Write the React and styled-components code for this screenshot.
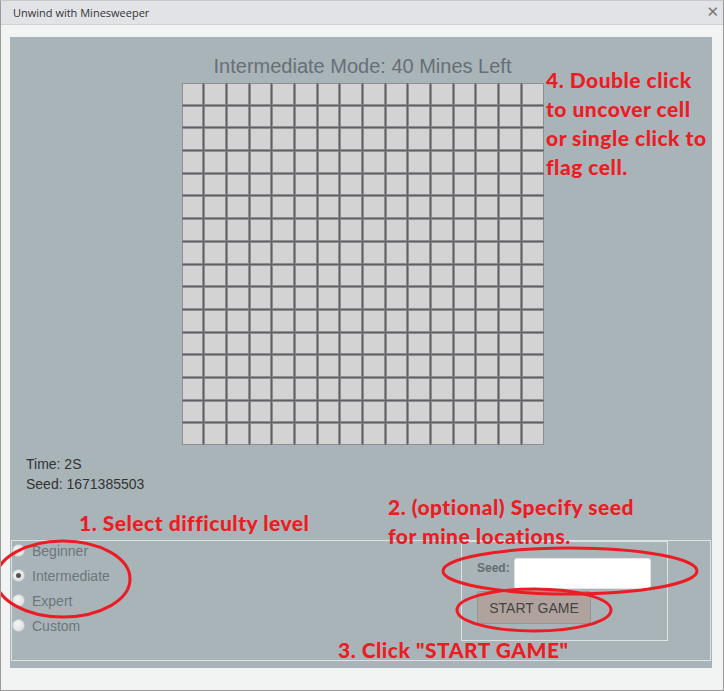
import React from 'react';
import styled, { createGlobalStyle } from 'styled-components';

const GlobalStyle = createGlobalStyle`
  body {
    margin: 0;
    background: #ffffff;
    font-family: "Liberation Sans", Arial, sans-serif;
  }
`;

const Window = styled.div`
  position: relative;
  width: 724px;
  height: 691px;
  box-sizing: border-box;
  border: 1px solid #9a9a9a;
  border-top-color: #c8c8c8;
  background: #f2f4f3;
  display: flex;
  flex-direction: column;
  overflow: hidden;
`;

const TitleBar = styled.div`
  height: 23px;
  flex: none;
  display: flex;
  align-items: center;
  justify-content: space-between;
  padding: 0 4px 0 12px;
  background: #e2e3e7;
  border-bottom: 1px solid #cfd2d4;
  font-family: "Open Sans", "Noto Sans", sans-serif;
  font-size: 11px;
  color: #333;
`;

const Close = styled.span`
  font-size: 15px;
  color: #777;
  font-family: "DejaVu Sans", sans-serif;
  line-height: 1;
`;

const Body = styled.div`
  flex: 1;
  padding: 12px 11px 0 9px;
`;

const Panel = styled.div`
  height: 631px;
  background: #a9b4b9;
  display: flex;
  flex-direction: column;
  padding: 0 1px 0 1px;
  box-sizing: border-box;
`;

const Board = styled.div`
  display: flex;
  flex-direction: column;
  align-items: center;
  padding: 13px 0 0 3px;
`;

const ModeTitle = styled.div`
  font-size: 20px;
  color: #676f74;
  line-height: 33px;
`;

const Grid = styled.div`
  width: 362px;
  height: 362px;
  display: grid;
  grid-template-columns: repeat(16, 1fr);
  grid-template-rows: repeat(16, 1fr);
  gap: 1px;
  background: #5e6064;
`;

const Cell = styled.div`
  background: #d3d3d3;
  border: 1px solid #8e8f90;
`;

const Info = styled.div`
  padding: 9px 0 0 15px;
  font-size: 14px;
  line-height: 20px;
  color: #333;
`;

const Options = styled.div`
  margin-top: 46px;
  height: 121px;
  box-sizing: border-box;
  border: 1px solid #dde2e4;
  display: flex;
  justify-content: space-between;
  align-items: flex-start;
  padding-right: 42px;
`;

const RadioList = styled.div`
  display: flex;
  flex-direction: column;
  margin-top: -3px;
`;

const RadioRow = styled.label`
  display: flex;
  align-items: center;
  height: 25px;
  gap: 7px;
  font-size: 14px;
  color: #6c767b;
`;

const Radio = styled.span`
  width: 13px;
  height: 13px;
  border-radius: 50%;
  box-sizing: border-box;
  border: 1px solid #c4c8ca;
  background: radial-gradient(circle at 40% 35%, #f4f4f4, #d9dbdc);
  display: flex;
  align-items: center;
  justify-content: center;
  &::after {
    content: '';
    width: 5px;
    height: 5px;
    border-radius: 50%;
    background: ${p => (p.checked ? '#555' : 'transparent')};
  }
`;

const SeedBox = styled.div`
  width: 207px;
  height: 100px;
  box-sizing: border-box;
  border: 1px solid #dde2e4;
  padding: 16px 0 0 15px;
  display: flex;
  flex-direction: column;
  gap: 2px;
`;

const SeedRow = styled.div`
  display: flex;
  align-items: flex-start;
  gap: 4px;
`;

const SeedLabel = styled.span`
  font-size: 12px;
  font-weight: bold;
  color: #656c70;
  padding-top: 3px;
`;

const SeedInput = styled.div`
  width: 137px;
  height: 31px;
  box-sizing: border-box;
  background: #fff;
  border: 1px solid #e6e6e6;
  border-radius: 3px;
`;

const StartButton = styled.button`
  width: 114px;
  height: 33px;
  box-sizing: border-box;
  background: #b0a39d;
  border: 1px solid #979592;
  border-radius: 3px;
  font-family: "Liberation Sans", Arial, sans-serif;
  font-size: 14px;
  color: #444;
  padding: 0;
`;

const Note = styled.div`
  position: absolute;
  left: ${p => p.x}px;
  top: ${p => p.y}px;
  font-family: Lato, "Open Sans", sans-serif;
  font-weight: 900;
  font-size: 21px;
  letter-spacing: 0.5px;
  line-height: 29px;
  color: #ec1c24;
  white-space: nowrap;
`;

const Marks = styled.svg`
  position: absolute;
  left: -1px;
  top: -1px;
  pointer-events: none;
`;

const levels = ['Beginner', 'Intermediate', 'Expert', 'Custom'];

export default function App() {
  return (
    <>
      <GlobalStyle />
      <Window>
        <TitleBar>
          <span>Unwind with Minesweeper</span>
          <Close>✕</Close>
        </TitleBar>
        <Body>
          <Panel>
            <Board>
              <ModeTitle>Intermediate Mode: 40 Mines Left</ModeTitle>
              <Grid>
                {Array.from({ length: 256 }, (_, i) => <Cell key={i} />)}
              </Grid>
            </Board>
            <Info>
              <div>Time: 2S</div>
              <div>Seed: 1671385503</div>
            </Info>
            <Options>
              <RadioList>
                {levels.map(l => (
                  <RadioRow key={l}>
                    <Radio checked={l === 'Intermediate'} />
                    {l}
                  </RadioRow>
                ))}
              </RadioList>
              <SeedBox>
                <SeedRow>
                  <SeedLabel>Seed:</SeedLabel>
                  <SeedInput />
                </SeedRow>
                <StartButton>START GAME</StartButton>
              </SeedBox>
            </Options>
          </Panel>
        </Body>

        <Note x={545} y={64}>
          4. Double click<br />to uncover cell<br />or single click to<br />flag cell.
        </Note>
        <Note x={78} y={507}>1. Select difficulty level</Note>
        <Note x={387} y={491}>
          2. (optional) Specify seed<br />for mine locations.
        </Note>
        <Note x={337} y={634}>3. Click "START GAME"</Note>

        <Marks width="724" height="691" viewBox="0 0 724 691">
          <g fill="none" stroke="#ec1c24" strokeWidth="3">
            <ellipse cx="63" cy="579" rx="67" ry="38" />
            <ellipse cx="570" cy="571" rx="127" ry="23" />
            <ellipse cx="534" cy="610" rx="77" ry="21" />
          </g>
        </Marks>
      </Window>
    </>
  );
}
